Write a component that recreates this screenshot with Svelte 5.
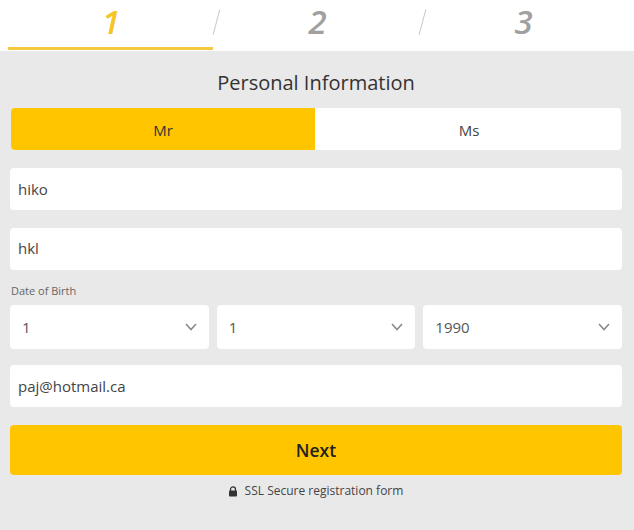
<script>
	let title = $state('Mr');
	const steps = ['1', '2', '3'];
	const dob = ['1', '1', '1990'];
</script>

<div class="page">
	<nav class="steps">
		{#each steps as step, i}
			<div class="step" class:active={i === 0}>
				<span class="num">{step}</span>
				{#if i < 2}<span class="slash"></span>{/if}
			</div>
		{/each}
	</nav>

	<main class="form">
		<h1>Personal Information</h1>

		<div class="toggle">
			<button class:on={title === 'Mr'} onclick={() => (title = 'Mr')}>Mr</button>
			<button class:on={title === 'Ms'} onclick={() => (title = 'Ms')}>Ms</button>
		</div>

		<div class="field first">hiko</div>
		<div class="field second">hkl</div>

		<div class="dob-label">Date of Birth</div>
		<div class="dob">
			{#each dob as val}
				<div class="select">
					<span>{val}</span>
					<svg width="12" height="8" viewBox="0 0 12 8" fill="none" stroke="#8a8a8a" stroke-width="1.6"><polyline points="1,1 6,6.5 11,1" /></svg>
				</div>
			{/each}
		</div>

		<div class="field email">paj@hotmail.ca</div>

		<button class="next">Next</button>

		<div class="secure">
			<svg width="10" height="11" viewBox="0 0 10 11"><path d="M2.5 5V3.4a2.5 2.5 0 0 1 5 0V5" fill="none" stroke="#333" stroke-width="1.3" /><rect x="1" y="4.6" width="8" height="6" rx="1" fill="#333" /></svg>
			<span>SSL Secure registration form</span>
		</div>
	</main>
</div>

<style>
	:global(body) {
		margin: 0;
		background: #e9e9e9;
	}

	.page {
		width: 634px;
		height: 530px;
		overflow: hidden;
		background: #e9e9e9;
		font-family: 'Open Sans', 'Noto Sans', sans-serif;
		color: #333;
	}

	.steps {
		display: grid;
		grid-template-columns: 205px 206px 206px;
		height: 51px;
		padding-left: 8px;
		background: #fff;
	}

	.step {
		position: relative;
		display: flex;
		justify-content: center;
		height: 50px;
		padding-left: 3px;
		box-sizing: border-box;
	}
	.step.active {
		padding-left: 1px;
		border-bottom: 3px solid #f4c93f;
	}

	.num {
		font-size: 33px;
		line-height: 44px;
		font-weight: 600;
		font-style: italic;
		color: #a0a0a0;
	}
	.active .num { color: #f5c526; }

	.slash {
		position: absolute;
		right: -4px;
		top: 9px;
		width: 1px;
		height: 26px;
		background: #c8c8c8;
		transform: rotate(15deg);
	}

	.form {
		display: flex;
		flex-direction: column;
		padding: 0 12px 0 10px;
	}

	h1 {
		margin: 17px 0 11px;
		font-size: 20px;
		line-height: 29px;
		font-weight: 400;
		text-align: center;
		color: #333;
	}

	.toggle {
		display: flex;
		height: 42px;
		margin: 0 1px 18px;
		border-radius: 4px;
		overflow: hidden;
		background: #fff;
	}
	.toggle button {
		flex: 1;
		border: none;
		padding: 2px 0 0 2px;
		background: #fff;
		font: 400 15px 'Open Sans', sans-serif;
		color: #444;
	}
	.toggle button.on {
		flex: 0 0 304px;
		padding-left: 0;
		background: #ffc600;
		color: #333;
	}

	.field {
		height: 42px;
		padding-left: 8px;
		line-height: 42px;
		font-size: 15px;
		background: #fff;
		border-radius: 4px;
		color: #444;
	}
	.field.first { margin-bottom: 18px; }
	.field.second {
		margin-bottom: 14px;
		line-height: 40px;
	}
	.field.email { margin-bottom: 18px; }

	.dob-label {
		height: 21px;
		margin-left: 1px;
		font-size: 11px;
		line-height: 14px;
		color: #666;
	}

	.dob {
		display: flex;
		gap: 8px;
		margin-bottom: 16px;
	}
	.select {
		flex: 1;
		height: 44px;
		display: flex;
		align-items: center;
		justify-content: space-between;
		padding: 0 12px;
		background: #fff;
		border-radius: 4px;
		font-size: 15px;
		color: #555;
	}

	.next {
		height: 50px;
		border: none;
		border-radius: 4px;
		background: #ffc600;
		font: 600 17.5px 'Open Sans', sans-serif;
		color: #222;
	}

	.secure {
		display: flex;
		align-items: center;
		justify-content: center;
		gap: 7px;
		margin-top: 7px;
		padding-right: 1px;
		font-size: 12px;
		line-height: 18px;
		color: #444;
	}
</style>
